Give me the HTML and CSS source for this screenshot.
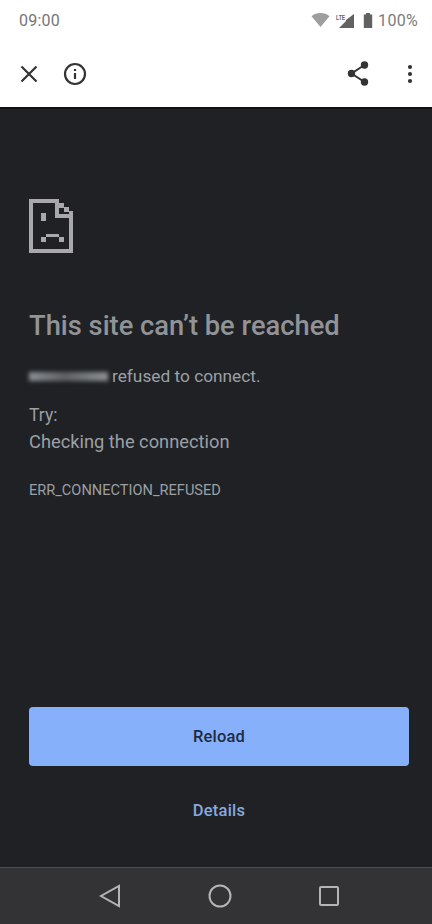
FILE: index.html
```html
<!DOCTYPE html>
<html lang="en">
<head>
<meta charset="utf-8">
<title>This site can't be reached</title>
<link rel="stylesheet" href="styles.css">
</head>
<body>
<div class="phone">
  <header class="status">
    <span class="time">09:00</span>
    <div class="status-right">
      <svg class="wifi" viewBox="0 0 18 14"><path d="M0 3.200C2.500 1 5.600 0 9 0s6.500 1 9 3.200L9 14z"/></svg>
      <svg class="signal" viewBox="0 0 18 15"><path d="M18 1v14H3l7-7V7z"/><text class="lte" x="0" y="7" textLength="9" lengthAdjust="spacingAndGlyphs">LTE</text></svg>
      <svg class="battery" viewBox="0 0 10 15"><path d="M3 0h4v1.500h2.200V15H.800V1.500H3z"/></svg>
      <span class="pct">100%</span>
    </div>
  </header>
  <nav class="toolbar">
    <div class="tool-group">
      <svg class="tool-x" viewBox="0 0 18 18"><path d="M1.500 1.500l15 15M16.500 1.500l-15 15"/></svg>
      <svg class="tool-info" viewBox="0 0 24 24"><circle cx="12" cy="12" r="10"/><path d="M12 11v6M12 7v2"/></svg>
    </div>
    <div class="tool-group">
      <svg class="tool-share" viewBox="0 0 22 25"><path class="share-line" d="M17.500 4L4.500 12.500l13 8.500"/><circle cx="17.500" cy="4" r="3.700"/><circle cx="4.500" cy="12.500" r="3.700"/><circle cx="17.500" cy="21" r="3.700"/></svg>
      <svg class="tool-more" viewBox="0 0 6 20"><circle cx="3" cy="3" r="2.100"/><circle cx="3" cy="10" r="2.100"/><circle cx="3" cy="17" r="2.100"/></svg>
    </div>
  </nav>
  <main class="content">
    <svg class="sad" viewBox="0 0 44 54" shape-rendering="crispEdges">
      <path fill-rule="evenodd" d="M0 0h30v4h5v4h5v4h4v42H0zM4 4v46h36V19H26V4zM30 6v9h10v-2h-5V9h-5z"/>
      <path d="M12 14h5v8h-5zM17 35h13v3H17zM12 38h5v5h-5zM30 38h5v5h-5z"/>
    </svg>
    <h1 class="title">This site can’t be reached</h1>
    <p class="line-refused"><span class="blur"></span><span>refused to connect.</span></p>
    <p class="try">Try:</p>
    <p class="check">Checking the connection</p>
    <p class="code">ERR_CONNECTION_REFUSED</p>
    <div class="actions">
      <button class="reload">Reload</button>
      <a class="details">Details</a>
    </div>
  </main>
  <footer class="navbar">
    <svg class="nav-back" viewBox="0 0 22 24"><path d="M20 2v20L2 12z"/></svg>
    <svg class="nav-home" viewBox="0 0 24 24"><circle cx="12" cy="12" r="10.500"/></svg>
    <svg class="nav-recent" viewBox="0 0 22 22"><rect x="2" y="2" width="18" height="18" rx="1"/></svg>
  </footer>
</div>
</body>
</html>
```
FILE: styles.css
```css
* { box-sizing: border-box; }
html, body { margin: 0; padding: 0; }
body { width: 432px; height: 924px; overflow: hidden; font-family: Roboto, "Liberation Sans", sans-serif; background: #202124; }
.phone { width: 432px; height: 924px; display: flex; flex-direction: column; }

.status { height: 40px; flex: none; background: #fff; display: flex; align-items: center; justify-content: space-between; padding: 0 14px 0 19px; color: #757575; }
.time { font-size: 16px; letter-spacing: .2px; }
.status-right { display: flex; align-items: center; }
.pct { font-size: 16px; margin-left: 5px; color: #7b7b7b; letter-spacing: .3px; }
.wifi { width: 19px; height: 14px; fill: #9e9e9e; }
.signal { width: 18px; height: 15px; margin-left: 6px; fill: #616161; }
.lte { font: 700 8px "Liberation Sans", sans-serif; }
.battery { width: 10px; height: 15px; margin-left: 9px; fill: #616161; }

.toolbar { height: 69px; flex: none; background: #fff; display: flex; align-items: center; justify-content: space-between; padding: 0 19px 0 20px; border-bottom: 2px solid #111; }
.tool-group { display: flex; align-items: center; }
.tool-x { width: 18px; height: 18px; fill: none; stroke: #333; stroke-width: 2.200; }
.tool-info { width: 24px; height: 24px; margin-left: 25px; fill: none; stroke: #333; stroke-width: 2.200; }
.tool-share { width: 22px; height: 25px; fill: #333; }
.share-line { fill: none; stroke: #333; stroke-width: 2; }
.tool-more { width: 6px; height: 20px; margin-left: 38px; fill: #333; }

.content { flex: 1; min-height: 0; background: #202124; display: flex; flex-direction: column; padding: 90px 23px 0 29px; }
.sad { width: 44px; height: 54px; fill: #a9a9ab; flex: none; }
.title { margin: 57px 0 0; font-size: 27.300px; line-height: 32px; font-weight: 500; color: #909498; white-space: nowrap; }
.line-refused { margin: 22px 0 0; display: flex; align-items: center; font-size: 17.300px; line-height: 24px; color: #9aa0a6; }
.blur { width: 79px; height: 9px; margin: 0 4px 0 0; background: linear-gradient(90deg, #8e9296, #5f6266 45%, #8e9296); filter: blur(2px); }
.try { margin: 15px 0 0; font-size: 17.500px; line-height: 24px; color: #9aa0a6; }
.check { margin: 3px 0 0; font-size: 18.300px; line-height: 24px; color: #9aa0a6; }
.code { margin: 27px 0 0; font-size: 14.600px; line-height: 18px; color: #9aa0a6; white-space: nowrap; }

.actions { margin-top: auto; padding: 0 0 47px; display: flex; flex-direction: column; align-items: center; }
.reload { width: 380px; height: 59px; border: 0; border-radius: 4px; background: #86b1fa; color: #1f2a44; font: 500 16.500px Roboto, sans-serif; letter-spacing: .2px; }
.details { margin-top: 36px; font-size: 16.500px; line-height: 18px; font-weight: 500; color: #86a9e0; letter-spacing: .2px; }

.navbar { height: 57px; flex: none; background: #333336; border-top: 1px solid #4c4c4f; display: flex; align-items: center; justify-content: center; padding-left: 6px; }
.navbar svg { fill: none; stroke: #b5b5b7; stroke-width: 2; }
.nav-back { width: 22px; height: 24px; }
.nav-home { width: 24px; height: 24px; margin-left: 87px; }
.nav-recent { width: 22px; height: 22px; margin-left: 86px; }
```
